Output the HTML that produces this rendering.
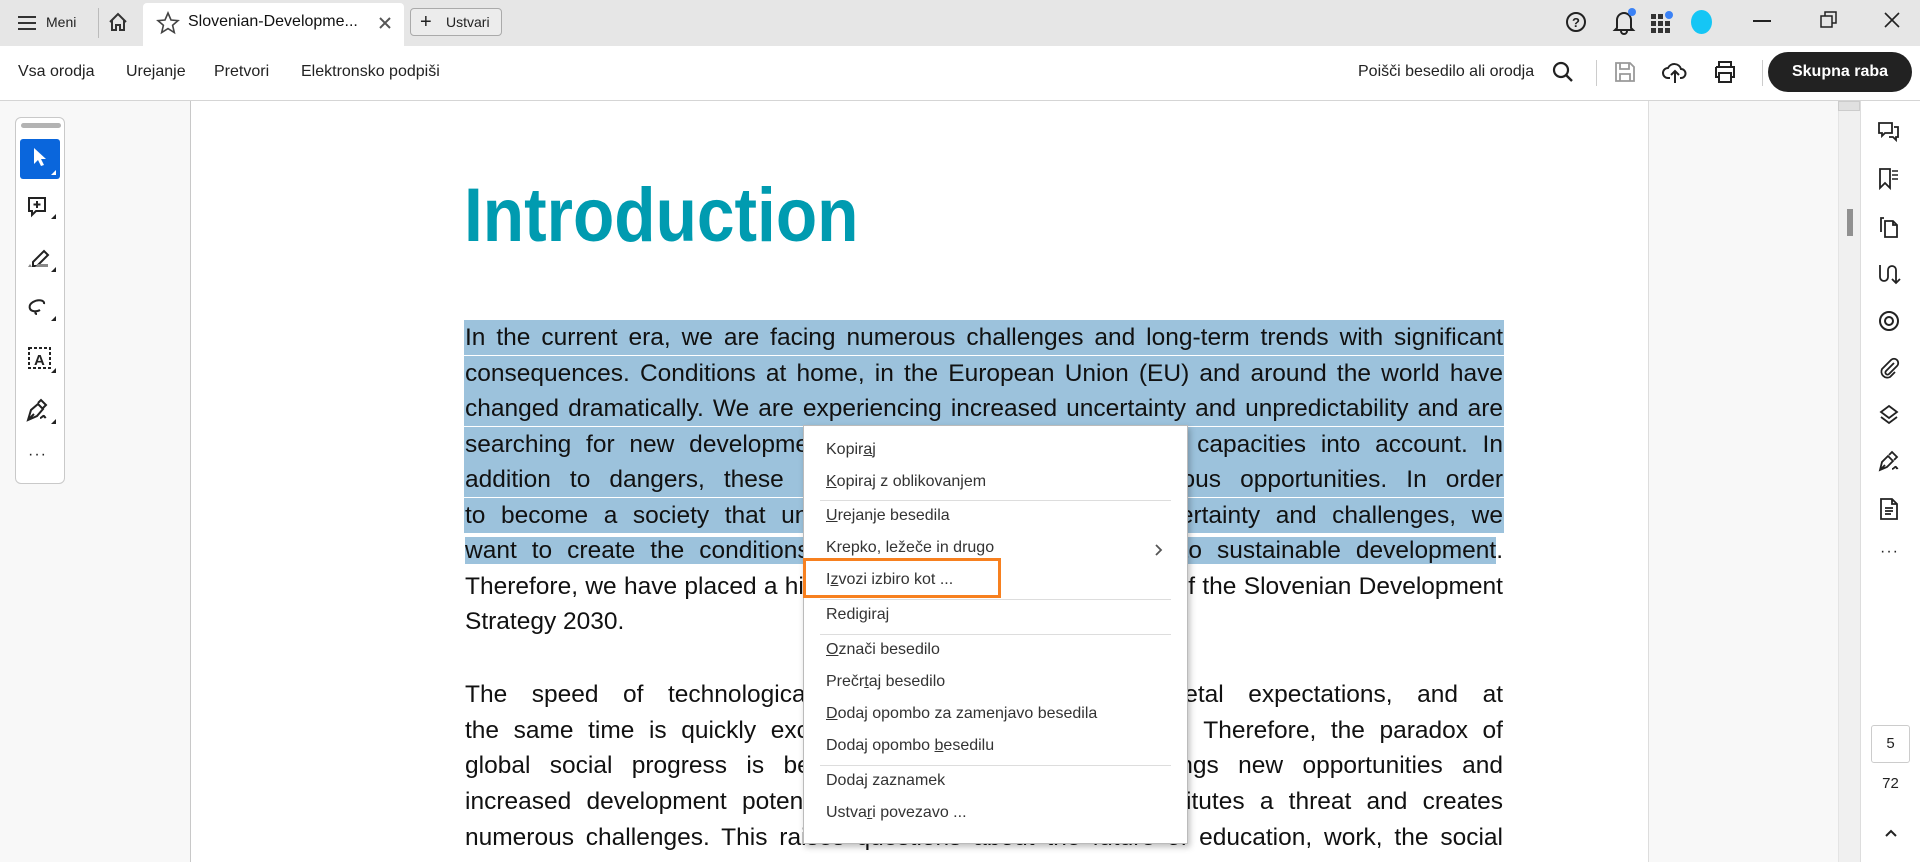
<!DOCTYPE html>
<html><head><meta charset="utf-8"><style>
*{margin:0;padding:0;box-sizing:border-box}
body{width:1920px;height:862px;overflow:hidden;font-family:"Liberation Sans",sans-serif;background:#fff;position:relative;color:#222}
.abs{position:absolute}
#tabbar{left:0;top:0;width:1920px;height:46px;background:#e6e6e6}
#toolbar{left:0;top:46px;width:1920px;height:55px;background:#fff;border-bottom:1px solid #d5d5d5}
.tb{position:absolute;top:63px;font-size:16px;color:#222}
#leftpanel{left:0;top:101px;width:191px;height:761px;background:#f8f8f8;border-right:1px solid #c8c8c8}
#strip{left:15px;top:117px;width:50px;height:367px;background:#fff;border:1px solid #c9c9c9;border-radius:6px}
#doc{left:191px;top:101px;width:1457px;height:761px;background:#fff}
#gray{left:1648px;top:101px;width:190px;height:761px;background:#f8f8f8;border-left:1px solid #ddd}
#sb{left:1838px;top:101px;width:22px;height:761px;background:#f0f0f0;border-left:1px solid #e4e4e4}
#rp{left:1860px;top:101px;width:60px;height:761px;background:#fff;border-left:1px solid #ddd}
h1{position:absolute;left:464px;top:166px;font-size:76px;font-weight:bold;color:#009bb0;transform:scaleX(0.89);transform-origin:left top;line-height:100px}
.ln{position:absolute;left:464px;width:1040px;height:35px;font-size:24.5px;line-height:35px;text-align:justify;text-align-last:justify;color:#111;padding:0 1px}
.hl{background:#9cc2dc}
.l{text-align-last:left}
#menu{left:803px;top:425px;width:385px;height:419px;background:#fff;border:1px solid #bbb;box-shadow:2px 3px 6px rgba(0,0,0,.25)}
.mi{position:absolute;left:22px;font-size:16px;color:#333}
.sep{position:absolute;left:16px;width:351px;height:1px;background:#ddd}
u{text-decoration:underline}
svg{position:absolute}
</style></head><body>
<div id="tabbar" class="abs"></div>
<svg style="left:17px;top:15px" width="20" height="16"><path d="M1 2h18M1 8h18M1 14h18" stroke="#333" stroke-width="2"/></svg>
<div class="abs" style="left:46px;top:14px;font-size:14px;color:#222">Meni</div>
<div class="abs" style="left:98px;top:8px;width:1px;height:30px;background:#bbb"></div>
<svg style="left:107px;top:11px" width="22" height="22"><path d="M3 11L11 3l8 8M5 9v10h4v-5h4v5h4V9" fill="none" stroke="#333" stroke-width="2"/></svg>
<div class="abs" style="left:143px;top:3px;width:261px;height:43px;background:#fff;border-radius:4px 4px 0 0"></div>
<svg style="left:156px;top:11px" width="24" height="24"><path d="M12 2l3 7 7 .6-5.4 4.7 1.7 7.2L12 17.6 5.7 21.5l1.7-7.2L2 9.6 9 9z" fill="none" stroke="#444" stroke-width="1.6"/></svg>
<div class="abs" style="left:188px;top:13px;font-size:16px;color:#111">Slovenian-Developme...</div>
<svg style="left:378px;top:16px" width="14" height="14"><path d="M2 2l10 10M12 2L2 12" stroke="#555" stroke-width="2"/></svg>
<div class="abs" style="left:410px;top:8px;width:92px;height:28px;border:1px solid #aaa;border-radius:4px;background:#ececec"></div>
<div class="abs" style="left:420px;top:11px;font-size:20px;color:#222">+</div>
<div class="abs" style="left:446px;top:14px;font-size:14px;color:#222">Ustvari</div>
<svg style="left:1564px;top:10px" width="24" height="24"><circle cx="12" cy="12" r="9" fill="none" stroke="#222" stroke-width="2"/><text x="8" y="17" font-size="13" font-weight="bold" font-family="Liberation Sans" fill="#222">?</text></svg>
<svg style="left:1610px;top:7px" width="28" height="28"><path d="M7 21V13a7 7 0 0 1 14 0v8l2 2H5zM11 24a3 3 0 0 0 6 0" fill="none" stroke="#222" stroke-width="2"/><circle cx="22" cy="5" r="4" fill="#3b82f6"/></svg>
<svg style="left:1650px;top:10px" width="26" height="26"><g fill="#333"><rect x="1" y="4" width="5" height="5"/><rect x="8" y="4" width="5" height="5"/><rect x="1" y="11" width="5" height="5"/><rect x="8" y="11" width="5" height="5"/><rect x="15" y="11" width="5" height="5"/><rect x="1" y="18" width="5" height="5"/><rect x="8" y="18" width="5" height="5"/><rect x="15" y="18" width="5" height="5"/></g><circle cx="19" cy="5" r="4" fill="#3b82f6"/></svg>
<div class="abs" style="left:1691px;top:10px;width:21px;height:24px;border-radius:50%;background:#15c6f5"></div>
<div class="abs" style="left:1753px;top:20px;width:18px;height:2px;background:#222"></div>
<svg style="left:1820px;top:11px" width="18" height="18"><path d="M1 5h11v11H1zM5 5V1h11v11h-4" fill="none" stroke="#222" stroke-width="1.5"/></svg>
<svg style="left:1883px;top:11px" width="18" height="18"><path d="M2 2l14 14M16 2L2 16" stroke="#222" stroke-width="1.6"/></svg>

<div id="toolbar" class="abs"></div>
<div class="tb" style="left:18px">Vsa orodja</div>
<div class="tb" style="left:126px">Urejanje</div>
<div class="tb" style="left:214px">Pretvori</div>
<div class="tb" style="left:301px">Elektronsko podpiši</div>
<div class="tb" style="left:1358px">Poišči besedilo ali orodja</div>
<svg style="left:1552px;top:61px" width="22" height="22"><circle cx="9" cy="9" r="7" fill="none" stroke="#222" stroke-width="2.2"/><path d="M14 14l6 6" stroke="#222" stroke-width="2.4"/></svg>
<div class="abs" style="left:1596px;top:60px;width:1px;height:26px;background:#ccc"></div>
<svg style="left:1614px;top:61px" width="22" height="22"><path d="M2 2h14l4 4v14H2z M6 2v6h9V2 M6 20v-7h10v7" fill="none" stroke="#999" stroke-width="1.8"/></svg>
<svg style="left:1662px;top:59px" width="26" height="26"><path d="M8 19H6a5 5 0 0 1 0-10 7 7 0 0 1 13 1 4.5 4.5 0 0 1 0 9h-1M13 24V12M9 16l4-4 4 4" fill="none" stroke="#222" stroke-width="2"/></svg>
<svg style="left:1713px;top:60px" width="24" height="24"><path d="M6 7V2h12v5M3 7h18v10h-3M6 17H3V7M6 13h12v9H6z" fill="none" stroke="#222" stroke-width="2"/></svg>
<div class="abs" style="left:1762px;top:60px;width:1px;height:26px;background:#ccc"></div>
<div class="abs" style="left:1768px;top:52px;width:144px;height:40px;border-radius:20px;background:#222;color:#fff;font-weight:bold;font-size:16px;line-height:40px;text-align:center">Skupna raba</div>

<div id="leftpanel" class="abs"></div>
<div id="strip" class="abs"></div>
<div class="abs" style="left:21px;top:123px;width:40px;height:5px;border-radius:3px;background:#b3b3b3"></div>
<div class="abs" style="left:20px;top:139px;width:40px;height:40px;border-radius:3px;background:#0a66dc"></div>
<svg style="left:20px;top:139px" width="40" height="40"><path d="M14 9v16l4-4 3 6 3-1-3-6h5z" fill="#fff"/><path d="M36 31v5h-5z" fill="#fff"/></svg>
<svg style="left:20px;top:192px" width="40" height="36"><path d="M9 6h16v13H16l-4 4v-4H9z" fill="none" stroke="#222" stroke-width="2"/><path d="M17 9v7M13.5 12.5h7" stroke="#222" stroke-width="2"/><path d="M36 22v5h-5z" fill="#222"/></svg>
<svg style="left:20px;top:243px" width="40" height="36"><path d="M13 19l11-11 4 4-11 11h-4z" fill="none" stroke="#222" stroke-width="2"/><path d="M8 24h4l-2-3zM15 24h13v-3H18z" fill="#888"/><path d="M36 24v5h-5z" fill="#222"/></svg>
<svg style="left:20px;top:292px" width="40" height="36"><path d="M24 12c1-4-6-5-11-2s-4 8 0 9 7-1 7-1M16 19c-1 1-1 3 1 3" fill="none" stroke="#222" stroke-width="2"/><path d="M36 24v5h-5z" fill="#222"/></svg>
<svg style="left:20px;top:342px" width="40" height="36"><rect x="9" y="6" width="21" height="20" fill="none" stroke="#222" stroke-width="2" stroke-dasharray="3 2"/><text x="14" y="23" font-size="15" font-weight="bold" font-family="Liberation Sans" fill="#222">A</text><path d="M36 26v5h-5z" fill="#222"/></svg>
<svg style="left:20px;top:395px" width="40" height="36"><path d="M8 25l3-10 7-6 5 5-6 7zM8 25l6-6M18 8l3-3 5 5-3 3M20 23c2 0 3-3 4-2s0 2 2 1" fill="none" stroke="#222" stroke-width="2"/><path d="M36 24v5h-5z" fill="#222"/></svg>
<div class="abs" style="left:28px;top:446px;font-size:16px;letter-spacing:1px;color:#222">···</div>

<div id="doc" class="abs"></div>
<div id="gray" class="abs"></div>
<div id="sb" class="abs"></div>
<div class="abs" style="left:1838px;top:101px;width:22px;height:10px;background:#e0e0e0;border:1px solid #ccc"></div>
<div class="abs" style="left:1847px;top:209px;width:6px;height:27px;background:#909090"></div>
<div id="rp" class="abs"></div>
<svg style="left:1877px;top:120px" width="24" height="24"><path d="M2 3h13v10H8l-3 3v-3H2zM17 7h4v10h-2v3l-3-3h-4" fill="none" stroke="#222" stroke-width="1.8"/></svg>
<svg style="left:1877px;top:167px" width="24" height="24"><path d="M3 2h10v19l-5-5-5 5z" fill="none" stroke="#222" stroke-width="1.8"/><path d="M15 4h6M15 8h6M15 12h6" stroke="#222" stroke-width="1.5"/></svg>
<svg style="left:1877px;top:215px" width="24" height="24"><path d="M7 3H4v14M8 6h8l4 4v12H8zM16 6v4h4" fill="none" stroke="#222" stroke-width="1.8"/></svg>
<svg style="left:1877px;top:262px" width="24" height="24"><path d="M3 3v12a4 4 0 0 0 8 0V8a4 4 0 0 1 8 0v12M15 17l4 4 4-4" fill="none" stroke="#222" stroke-width="1.8"/></svg>
<svg style="left:1877px;top:309px" width="24" height="24"><circle cx="12" cy="12" r="9" fill="none" stroke="#222" stroke-width="2"/><circle cx="12" cy="12" r="4" fill="none" stroke="#222" stroke-width="2"/></svg>
<svg style="left:1877px;top:356px" width="24" height="24"><path d="M17 7l-8 8a2 2 0 0 0 3 3l8-8a4 4 0 0 0-6-6L5 13a6 6 0 0 0 8 8l5-5" fill="none" stroke="#222" stroke-width="1.8"/></svg>
<svg style="left:1877px;top:403px" width="24" height="24"><path d="M12 3l8 6-8 6-8-6zM4 14l8 6 8-6" fill="none" stroke="#222" stroke-width="1.8"/></svg>
<svg style="left:1877px;top:450px" width="24" height="24"><path d="M3 20l2-8 6-6 5 5-6 6zM3 20l5-5M12 5l3-3 5 5-3 3M15 19c2 0 3-3 4-2s0 2 2 1" fill="none" stroke="#222" stroke-width="1.8"/></svg>
<svg style="left:1877px;top:497px" width="24" height="24"><path d="M4 2h11l5 5v15H4zM15 2v5h5M8 11h8M8 14h8M8 17h6" fill="none" stroke="#222" stroke-width="1.8"/></svg>
<div class="abs" style="left:1880px;top:543px;font-size:16px;letter-spacing:1px;color:#222">···</div>
<div class="abs" style="left:1871px;top:725px;width:39px;height:38px;border:1px solid #ccc;border-radius:3px;background:#fff;font-size:15px;text-align:center;line-height:36px;color:#222">5</div>
<div class="abs" style="left:1871px;top:775px;width:39px;font-size:15px;text-align:center;color:#222">72</div>
<svg style="left:1884px;top:828px" width="14" height="10"><path d="M2 8l5-5 5 5" fill="none" stroke="#222" stroke-width="2"/></svg>

<h1>Introduction</h1>
<div class="ln hl" style="top:320px">In the current era, we are facing numerous challenges and long-term trends with significant</div>
<div class="ln hl" style="top:356px">consequences. Conditions at home, in the European Union (EU) and around the world have</div>
<div class="ln hl" style="top:391px">changed dramatically. We are experiencing increased uncertainty and unpredictability and are</div>
<div class="ln hl" style="top:427px">searching for new development paths that take the country’s capacities into account. In</div>
<div class="ln hl" style="top:462px">addition to dangers, these developments also bring numerous opportunities. In order</div>
<div class="ln hl" style="top:498px">to become a society that understands and responds to uncertainty and challenges, we</div>
<div class="ln" style="top:533px"><span class="hl">want to create the conditions for a high quality of life and to sustainable development</span>.</div>
<div class="ln" style="top:569px">Therefore, we have placed a high quality of life for all at the core of the Slovenian Development</div>
<div class="ln l" style="top:604px">Strategy 2030.</div>
<div class="ln" style="top:677px">The speed of technological progress is surpassing societal expectations, and at</div>
<div class="ln" style="top:713px">the same time is quickly exceeding our ability to adapt to it. Therefore, the paradox of</div>
<div class="ln" style="top:748px">global social progress is becoming evident: technology brings new opportunities and</div>
<div class="ln" style="top:784px">increased development potential, but at the same time constitutes a threat and creates</div>
<div class="ln" style="top:820px">numerous challenges. This raises questions about the future of education, work, the social</div>

<div id="menu" class="abs">
<div class="mi" style="top:15px">Kopir<u>a</u>j</div>
<div class="mi" style="top:47px"><u>K</u>opiraj z oblikovanjem</div>
<div class="sep" style="top:74px"></div>
<div class="mi" style="top:81px"><u>U</u>rejanje besedila</div>
<div class="mi" style="top:113px">Krepko, ležeče in drugo</div>
<svg style="left:350px;top:117px" width="10" height="14"><path d="M2 2l5 5-5 5" fill="none" stroke="#555" stroke-width="1.8"/></svg>
<div class="mi" style="top:145px">I<u>z</u>vozi izbiro kot ...</div>
<div class="sep" style="top:173px"></div>
<div class="mi" style="top:180px">Redigiraj</div>
<div class="sep" style="top:208px"></div>
<div class="mi" style="top:215px"><u>O</u>znači besedilo</div>
<div class="mi" style="top:247px">Prečr<u>t</u>aj besedilo</div>
<div class="mi" style="top:279px"><u>D</u>odaj opombo za zamenjavo besedila</div>
<div class="mi" style="top:311px">Dodaj opombo <u>b</u>esedilu</div>
<div class="sep" style="top:339px"></div>
<div class="mi" style="top:346px">Dodaj zaznamek</div>
<div class="mi" style="top:378px">Ustva<u>r</u>i povezavo ...</div>
</div>
<div class="abs" style="left:803px;top:558px;width:198px;height:40px;border:3px solid #f7801f"></div>
</body></html>
